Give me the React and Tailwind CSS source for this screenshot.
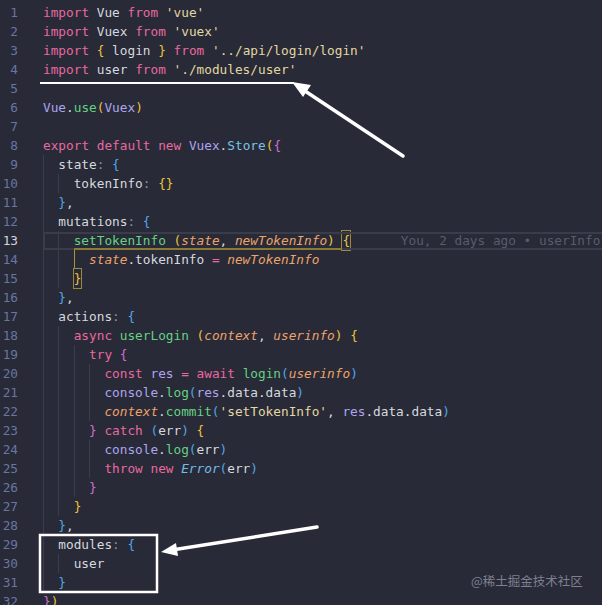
const KW = "text-[#e7699f]";
const PL = "text-[#d6d9df]";
const STR = "text-[#e3d7a2]";
const VAR = "text-[#aea4ee]";
const FN = "text-[#66d184]";
const PAR = "text-[#eda36a] italic";
const CLS = "text-[#79c3e6]";
const COL = "text-[#8494a8]";
const BY = "text-[#f0c23a]";
const BP = "text-[#cd6fd6]";
const BB = "text-[#52a6e9]";

// each line: [indentLevel, tokens, mode]
const lines = [
  [0, [["import", KW], [" Vue ", PL], ["from", KW], [" "], ["'vue'", STR]]],
  [0, [["import", KW], [" Vuex ", PL], ["from", KW], [" "], ["'vuex'", STR]]],
  [0, [["import", KW], [" "], ["{", BY], [" login ", PL], ["}", BY], [" "], ["from", KW], [" "], ["'../api/login/login'", STR]]],
  [0, [["import", KW], [" user ", PL], ["from", KW], [" "], ["'./modules/user'", STR]]],
  [0, []],
  [0, [["Vue", VAR], [".", PL], ["use", FN], ["(", BY], ["Vuex", VAR], [")", BY]]],
  [0, []],
  [0, [["export", KW], [" "], ["default", KW], [" "], ["new", KW], [" "], ["Vuex", VAR], [".", PL], ["Store", CLS], ["(", BY], ["{", BP]]],
  [1, [["state", PL], [":", COL], [" "], ["{", BB]]],
  [2, [["tokenInfo", PL], [":", COL], [" "], ["{}", BY]]],
  [1, [["}", BB], [",", PL]]],
  [1, [["mutations", PL], [":", COL], [" "], ["{", BB]]],
  [2, [["setTokenInfo", FN], [" "], ["(", BY], ["state", PAR], [", ", PL], ["newTokenInfo", PAR], [")", BY], [" "], ["{", BY, "box"]], "current"],
  [2, [["state", PAR], [".tokenInfo ", PL], ["=", KW], [" "], ["newTokenInfo", PAR]], "active"],
  [2, [["}", BY, "box"]]],
  [1, [["}", BB], [",", PL]]],
  [1, [["actions", PL], [":", COL], [" "], ["{", BB]]],
  [2, [["async", KW], [" "], ["userLogin", FN], [" "], ["(", BY], ["context", PAR], [", ", PL], ["userinfo", PAR], [")", BY], [" "], ["{", BY]]],
  [3, [["try", KW], [" "], ["{", BP]]],
  [4, [["const", KW], [" "], ["res", VAR], [" "], ["=", KW], [" "], ["await", KW], [" "], ["login", FN], ["(", BB], ["userinfo", PAR], [")", BB]]],
  [4, [["console", VAR], [".", PL], ["log", FN], ["(", BB], ["res", VAR], [".data.data", PL], [")", BB]]],
  [4, [["context", PAR], [".", PL], ["commit", FN], ["(", BB], ["'setTokenInfo'", STR], [", ", PL], ["res", VAR], [".data.data", PL], [")", BB]]],
  [3, [["}", BP], [" "], ["catch", KW], [" "], ["(", BB], ["err", PL], [")", BB], [" "], ["{", BY]]],
  [4, [["console", VAR], [".", PL], ["log", FN], ["(", BB], ["err", PL], [")", BB]]],
  [4, [["throw", KW], [" "], ["new", KW], [" "], ["Error", "text-[#72bde6] italic"], ["(", BB], ["err", PL], [")", BB]]],
  [3, [["}", BP]]],
  [2, [["}", BY]]],
  [1, [["}", BB], [",", PL]]],
  [1, [["modules", PL], [":", COL], [" "], ["{", BB]]],
  [2, [["user", PL]]],
  [1, [["}", BB]]],
  [0, [["}", BP], [")", BY]]],
];

const Line = ({ n, indent, tokens, mode }) => {
  const current = mode === "current";
  const guides = [];
  for (let i = 0; i < indent; i++) {
    guides.push(
      <span key={i} className="w-[2ch] h-full shrink-0 border-l border-[#3a3e4c]" />
    );
  }
  // bracket pair guide of the block under the cursor
  if (mode === "active") {
    guides.push(
      <span key="a" className="w-[2ch] h-full shrink-0 border-l border-[#a8943c]" />
    );
  }

  return (
    <div className="flex h-[19px] items-center">
      <div className={`w-[18px] text-right shrink-0 ${current ? "text-[#d2d6df]" : "text-[#6a76a0]"}`}>
        {n}
      </div>
      <div className="relative ml-[25px] flex flex-1 h-full items-center whitespace-pre">
        {current && (
          <>
            <span className="absolute left-0 right-[-40px] top-[1px] bottom-0 border-2 border-[#393c49]" />
            <span className="absolute left-[4ch] w-[35ch] bottom-0 h-[2px] bg-[#8a7a35]" />
          </>
        )}
        {guides}
        {tokens.map((t, i) => (
          <span
            key={i}
            className={`${t[1] || PL} ${t[2] === "box" ? "outline outline-[#9a8a3e]" : ""}`}
          >
            {t[0]}
          </span>
        ))}
        {current && (
          <span className="ml-[6.6ch] text-[#585c6d]">You, 2 days ago • userInfo</span>
        )}
      </div>
    </div>
  );
};

const App = () => {
  return (
    <div
      className="relative w-[602px] h-[605px] overflow-hidden bg-[#282a37] text-[12.75px]"
      style={{ fontFamily: "'DejaVu Sans Mono', 'Liberation Mono', monospace" }}
    >
      <div className="pt-[3px]">
        {lines.map((l, i) => (
          <Line key={i} n={i + 1} indent={l[0]} tokens={l[1]} mode={l[2]} />
        ))}
      </div>

      {/* annotations drawn on top of the code */}
      <svg className="absolute inset-0 pointer-events-none" width="602" height="605">
        <line x1="40" y1="83" x2="294" y2="83" stroke="#fff" strokeWidth="2" />
        <line x1="403" y1="156" x2="302" y2="89" stroke="#fff" strokeWidth="3.5" strokeLinecap="round" />
        <polygon points="292,82 303,97 311,85" fill="#fff" />
        <rect x="40" y="535" width="117" height="57" fill="none" stroke="#fff" strokeWidth="2.5" />
        <line x1="317" y1="527" x2="172" y2="550" stroke="#fff" strokeWidth="3.5" strokeLinecap="round" />
        <polygon points="161,552 176,543 178,556" fill="#fff" />
      </svg>

      <div
        className="absolute left-[471px] top-[572px] text-[12.5px] text-[#7d8090]"
        style={{ fontFamily: "'Noto Sans CJK SC', 'Noto Sans', sans-serif" }}
      >
        @稀土掘金技术社区
      </div>
    </div>
  );
};

export default App;
